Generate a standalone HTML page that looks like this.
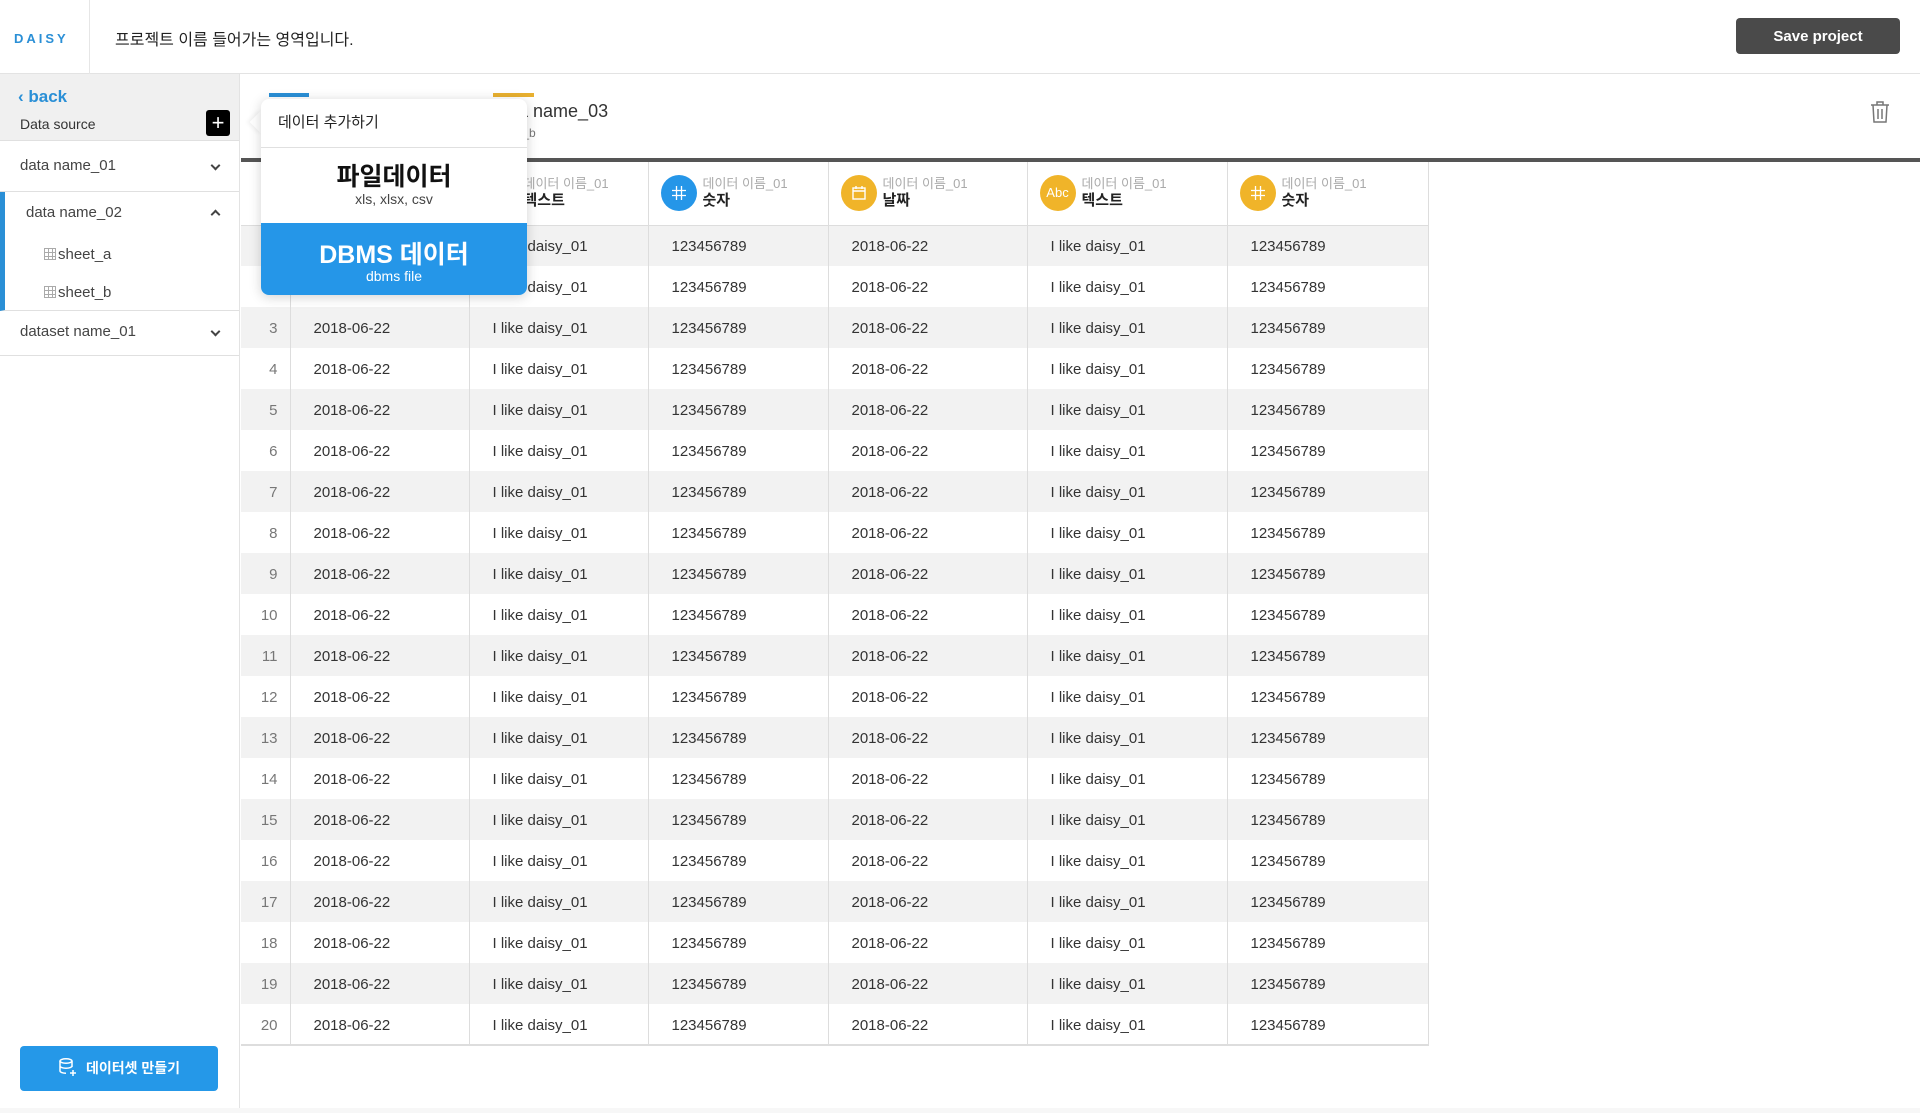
<!DOCTYPE html>
<html><head><meta charset="utf-8">
<style>
*{box-sizing:border-box;margin:0;padding:0}
body{width:1920px;height:1113px;position:relative;overflow:hidden;background:#fff;font-family:"Liberation Sans","Noto Sans CJK KR",sans-serif;color:#333}
.abs{position:absolute}
#hdr{left:0;top:0;width:1920px;height:74px;border-bottom:1px solid #e3e3e3;background:#fff}
.logo{left:14px;top:31px;color:#2a8fd6;font-weight:bold;font-size:13px;letter-spacing:3px}
.sep{left:89px;top:0;width:1px;height:74px;background:#e6e6e6}
.ptitle{left:115px;top:26px;font-size:16px;color:#222}
.save{left:1736px;top:18px;width:164px;height:36px;background:#4a4a4a;border-radius:4px;color:#fff;font-weight:bold;font-size:15px;text-align:center;line-height:38px}
#side{left:0;top:74px;width:240px;height:1034px;border-right:1px solid #e3e3e3;background:#fff}
.stop{left:0;top:0;width:239px;height:67px;background:#f0f0f0;border-bottom:1px solid #e0e0e0}
.back{left:18px;top:13px;color:#2a8fd6;font-weight:bold;font-size:17px}
.dsrc{left:20px;top:42px;font-size:14px;color:#333}
.plus{left:206px;top:36px;width:24px;height:26px;background:#000;border-radius:3px;color:#fff;font-size:22px;line-height:25px;text-align:center}
.item{left:0;width:239px;border-bottom:1px solid #e0e0e0;font-size:15px;color:#444}
.chev{position:absolute;right:20px;width:7px;height:7px;border-right:2px solid #444;border-bottom:2px solid #444}
.sheet{font-size:15px;color:#444}
.sic{display:inline-block;width:12px;height:12px;border:1px solid #aaa;background:
linear-gradient(#aaa,#aaa) 0 3px/100% 1px no-repeat,linear-gradient(#aaa,#aaa) 0 7px/100% 1px no-repeat,linear-gradient(#aaa,#aaa) 3px 0/1px 100% no-repeat,linear-gradient(#aaa,#aaa) 7px 0/1px 100% no-repeat;vertical-align:-1px;margin-right:2px}
.mk{left:20px;top:1046px;width:198px;height:45px;background:#2598e8;border-radius:4px;color:#fff;font-size:14px;font-weight:bold;line-height:45px;text-align:center}
.bot{left:0;top:1108px;width:1920px;height:5px;background:#f7f7f7}
.tabline{left:241px;top:158px;width:1679px;height:4px;background:#555}
table{position:absolute;left:241px;top:162px;border-collapse:collapse;font-size:15px}
td{height:41px;border-right:1px solid #ddd;padding-left:23px;padding-top:2px;color:#333;white-space:nowrap}
tr.h td{height:63px;padding-left:12px;padding-top:0;border-bottom:1px solid #ddd}
tbody tr:nth-child(even) td{background:#f2f2f2}
td.n{padding:2px 12px 0 0;text-align:right;color:#777;border-right:1px solid #ddd}
tr:last-child td{border-bottom:2px solid #ddd}
.ci{display:inline-block;width:36px;height:36px;border-radius:50%;vertical-align:middle;color:#fff;text-align:center;line-height:36px;font-size:20px;margin-right:6px}
.hl{display:inline-block;vertical-align:middle;line-height:1.25}
.hl small{display:block;font-size:13px;color:#aaa}
.hl b{display:block;font-size:15px;color:#222}
.pop{left:261px;top:99px;width:266px;height:196px;background:#fff;border-radius:8px;box-shadow:0 2px 12px rgba(0,0,0,.18)}
.arr{left:253px;top:114px;width:16px;height:16px;background:#fff;transform:rotate(45deg);box-shadow:-2px 2px 4px rgba(0,0,0,.06)}
</style></head><body>
<div id="hdr" class="abs">
<div class="abs logo">DAISY</div>
<div class="abs sep"></div>
<div class="abs ptitle">프로젝트 이름 들어가는 영역입니다.</div>
<div class="abs save">Save project</div>
</div>

<div id="side" class="abs">
<div class="abs stop">
<div class="abs back">‹ back</div>
<div class="abs dsrc">Data source</div>
<div class="abs plus">+</div>
</div>
<div class="abs item" style="top:68px;height:50px;padding:15px 0 0 20px">data name_01<span class="chev" style="top:20px;transform:rotate(45deg)"></span></div>
<div class="abs item" style="top:118px;height:119px;border-left:5px solid #2a8fd6">
<div class="abs" style="left:21px;top:12px">data name_02</div><span class="chev" style="top:19px;transform:rotate(-135deg)"></span>
<div class="abs sheet" style="left:39px;top:54px"><span class="sic"></span>sheet_a</div>
<div class="abs sheet" style="left:39px;top:92px"><span class="sic"></span>sheet_b</div>
</div>
<div class="abs item" style="top:237px;height:45px;padding:12px 0 0 20px">dataset name_01<span class="chev" style="top:17px;transform:rotate(45deg)"></span></div>
<div class="abs mk" style="top:972px"><svg width="20" height="20" viewBox="0 0 20 20" style="vertical-align:-4px;margin-right:8px" fill="none" stroke="#fff" stroke-width="1.5"><ellipse cx="8" cy="4" rx="6" ry="2.2"/><path d="M2 4v10c0 1.2 2.7 2.2 6 2.2M14 4v6M2 9c0 1.2 2.7 2.2 6 2.2s6-1 6-2.2"/><path d="M15 13v6M12 16h6"/></svg>데이터셋 만들기</div>
</div>
<div class="abs bot"></div>

<div class="abs" style="left:269px;top:93px;width:40px;height:4px;background:#2a8fd6"></div>
<div class="abs" style="left:269px;top:101px;font-size:18px;color:#333">data name_02</div>
<div class="abs" style="left:493px;top:93px;width:41px;height:4px;background:#e8b030"></div>
<div class="abs" style="left:493px;top:101px;font-size:18px;color:#333">data name_03</div>
<div class="abs" style="left:493px;top:126px;font-size:12px;color:#777">sheet_b</div>
<svg class="abs" style="left:1870px;top:100px" width="20" height="24" viewBox="0 0 20 24" fill="none" stroke="#777" stroke-width="1.5"><path d="M1 5h18M7 5V2h6v3M3 5l1 17h12l1-17M8 9v10M12 9v10"/></svg>
<div class="abs tabline"></div>

<table>
<tr class="h"><td class="n" style="width:49px"></td>
<td style="width:179px"><span class="ci" style="background:#f0b429">▦</span><span class="hl"><small>데이터 이름_01</small><b>날짜</b></span></td>
<td style="width:179px"><span class="ci" style="background:#2596e8;font-size:13px">Abc</span><span class="hl"><small>데이터 이름_01</small><b>텍스트</b></span></td>
<td style="width:180px"><span class="ci" style="background:#2596e8"><svg width="16" height="16" viewBox="0 0 16 16" fill="none" stroke="#fff" stroke-width="1.3" style="vertical-align:-2px"><path d="M5.5 1v14M10.5 1v14M1 5.5h14M1 10.5h14"/></svg></span><span class="hl"><small>데이터 이름_01</small><b>숫자</b></span></td>
<td style="width:199px"><span class="ci" style="background:#f0b429"><svg width="16" height="16" viewBox="0 0 16 16" fill="none" stroke="#fff" stroke-width="1.4" style="vertical-align:-2px"><rect x="2" y="3" width="12" height="11"/><path d="M2 6h12M5 1v3M11 1v3"/></svg></span><span class="hl"><small>데이터 이름_01</small><b>날짜</b></span></td>
<td style="width:200px"><span class="ci" style="background:#f0b429;font-size:13px">Abc</span><span class="hl"><small>데이터 이름_01</small><b>텍스트</b></span></td>
<td style="width:201px"><span class="ci" style="background:#f0b429"><svg width="16" height="16" viewBox="0 0 16 16" fill="none" stroke="#fff" stroke-width="1.3" style="vertical-align:-2px"><path d="M5.5 1v14M10.5 1v14M1 5.5h14M1 10.5h14"/></svg></span><span class="hl"><small>데이터 이름_01</small><b>숫자</b></span></td></tr>
<tr><td class="n">1</td><td>2018-06-22</td><td>I like daisy_01</td><td>123456789</td><td>2018-06-22</td><td>I like daisy_01</td><td>123456789</td></tr>
<tr><td class="n">2</td><td>2018-06-22</td><td>I like daisy_01</td><td>123456789</td><td>2018-06-22</td><td>I like daisy_01</td><td>123456789</td></tr>
<tr><td class="n">3</td><td>2018-06-22</td><td>I like daisy_01</td><td>123456789</td><td>2018-06-22</td><td>I like daisy_01</td><td>123456789</td></tr>
<tr><td class="n">4</td><td>2018-06-22</td><td>I like daisy_01</td><td>123456789</td><td>2018-06-22</td><td>I like daisy_01</td><td>123456789</td></tr>
<tr><td class="n">5</td><td>2018-06-22</td><td>I like daisy_01</td><td>123456789</td><td>2018-06-22</td><td>I like daisy_01</td><td>123456789</td></tr>
<tr><td class="n">6</td><td>2018-06-22</td><td>I like daisy_01</td><td>123456789</td><td>2018-06-22</td><td>I like daisy_01</td><td>123456789</td></tr>
<tr><td class="n">7</td><td>2018-06-22</td><td>I like daisy_01</td><td>123456789</td><td>2018-06-22</td><td>I like daisy_01</td><td>123456789</td></tr>
<tr><td class="n">8</td><td>2018-06-22</td><td>I like daisy_01</td><td>123456789</td><td>2018-06-22</td><td>I like daisy_01</td><td>123456789</td></tr>
<tr><td class="n">9</td><td>2018-06-22</td><td>I like daisy_01</td><td>123456789</td><td>2018-06-22</td><td>I like daisy_01</td><td>123456789</td></tr>
<tr><td class="n">10</td><td>2018-06-22</td><td>I like daisy_01</td><td>123456789</td><td>2018-06-22</td><td>I like daisy_01</td><td>123456789</td></tr>
<tr><td class="n">11</td><td>2018-06-22</td><td>I like daisy_01</td><td>123456789</td><td>2018-06-22</td><td>I like daisy_01</td><td>123456789</td></tr>
<tr><td class="n">12</td><td>2018-06-22</td><td>I like daisy_01</td><td>123456789</td><td>2018-06-22</td><td>I like daisy_01</td><td>123456789</td></tr>
<tr><td class="n">13</td><td>2018-06-22</td><td>I like daisy_01</td><td>123456789</td><td>2018-06-22</td><td>I like daisy_01</td><td>123456789</td></tr>
<tr><td class="n">14</td><td>2018-06-22</td><td>I like daisy_01</td><td>123456789</td><td>2018-06-22</td><td>I like daisy_01</td><td>123456789</td></tr>
<tr><td class="n">15</td><td>2018-06-22</td><td>I like daisy_01</td><td>123456789</td><td>2018-06-22</td><td>I like daisy_01</td><td>123456789</td></tr>
<tr><td class="n">16</td><td>2018-06-22</td><td>I like daisy_01</td><td>123456789</td><td>2018-06-22</td><td>I like daisy_01</td><td>123456789</td></tr>
<tr><td class="n">17</td><td>2018-06-22</td><td>I like daisy_01</td><td>123456789</td><td>2018-06-22</td><td>I like daisy_01</td><td>123456789</td></tr>
<tr><td class="n">18</td><td>2018-06-22</td><td>I like daisy_01</td><td>123456789</td><td>2018-06-22</td><td>I like daisy_01</td><td>123456789</td></tr>
<tr><td class="n">19</td><td>2018-06-22</td><td>I like daisy_01</td><td>123456789</td><td>2018-06-22</td><td>I like daisy_01</td><td>123456789</td></tr>
<tr><td class="n">20</td><td>2018-06-22</td><td>I like daisy_01</td><td>123456789</td><td>2018-06-22</td><td>I like daisy_01</td><td>123456789</td></tr>
</table>

<div class="abs arr"></div>
<div class="abs pop">
<div class="abs" style="left:17px;top:12px;font-size:15px;color:#222">데이터 추가하기</div>
<div class="abs" style="left:0;top:48px;width:266px;height:1px;background:#e0e0e0"></div>
<div class="abs" style="left:0;top:58px;width:266px;text-align:center;font-size:25px;font-weight:bold;color:#111">파일데이터</div>
<div class="abs" style="left:0;top:92px;width:266px;text-align:center;font-size:14px;color:#444">xls, xlsx, csv</div>
<div class="abs" style="left:0;top:124px;width:266px;height:72px;background:#2596e8;border-radius:0 0 8px 8px">
<div class="abs" style="left:0;top:12px;width:266px;text-align:center;font-size:25px;font-weight:bold;color:#fff">DBMS 데이터</div>
<div class="abs" style="left:0;top:45px;width:266px;text-align:center;font-size:14px;color:#fff">dbms file</div>
</div>
</div>
</body></html>
